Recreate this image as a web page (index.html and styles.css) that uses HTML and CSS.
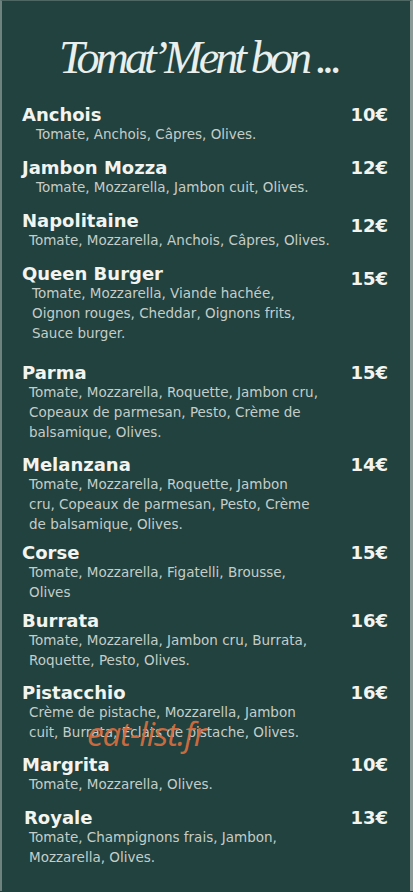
FILE: index.html
```html
<!DOCTYPE html>
<html lang="fr">
  <head>
    <meta charset="UTF-8" />
    <title>Tomat'Ment bon</title>
    <link rel="stylesheet" href="styles.css">
  </head>
  <body>
    <!-- carte des pizzas -->
    <div class="menu">
      <h1 class="title">Tomat’Ment bon ...</h1>

      <ul class="list">
        <li class="item item--wide">
          <div class="head"><span class="name">Anchois</span><span class="price">10€</span></div>
          <p class="desc desc--far">Tomate, Anchois, Câpres, Olives.</p>
        </li>
        <li class="item item--wide">
          <div class="head"><span class="name">Jambon Mozza</span><span class="price">12€</span></div>
          <p class="desc desc--far">Tomate, Mozzarella, Jambon cuit, Olives.</p>
        </li>
        <li class="item item--wide">
          <div class="head"><span class="name">Napolitaine</span><span class="price price--low">12€</span></div>
          <p class="desc">Tomate, Mozzarella, Anchois, Câpres, Olives.</p>
        </li>
        <li class="item item--loose">
          <div class="head"><span class="name">Queen Burger</span><span class="price price--low">15€</span></div>
          <p class="desc desc--mid">Tomate, Mozzarella, Viande hachée,<br>Oignon rouges, Cheddar, Oignons frits,<br>Sauce burger.</p>
        </li>
        <li class="item">
          <div class="head"><span class="name">Parma</span><span class="price">15€</span></div>
          <p class="desc">Tomate, Mozzarella, Roquette, Jambon cru,<br>Copeaux de parmesan, Pesto, Crème de<br>balsamique, Olives.</p>
        </li>
        <li class="item item--tight">
          <div class="head"><span class="name">Melanzana</span><span class="price">14€</span></div>
          <p class="desc">Tomate, Mozzarella, Roquette, Jambon<br>cru, Copeaux de parmesan, Pesto, Crème<br>de balsamique, Olives.</p>
        </li>
        <li class="item item--tight">
          <div class="head"><span class="name">Corse</span><span class="price">15€</span></div>
          <p class="desc">Tomate, Mozzarella, Figatelli, Brousse,<br>Olives</p>
        </li>
        <li class="item">
          <div class="head"><span class="name">Burrata</span><span class="price">16€</span></div>
          <p class="desc">Tomate, Mozzarella, Jambon cru, Burrata,<br>Roquette, Pesto, Olives.</p>
        </li>
        <li class="item">
          <div class="head"><span class="name">Pistacchio</span><span class="price">16€</span></div>
          <p class="desc">Crème de pistache, Mozzarella, Jambon<br>cuit, Burrata, Eclats de pistache, Olives.</p>
        </li>
        <li class="item item--wide">
          <div class="head"><span class="name">Margrita</span><span class="price">10€</span></div>
          <p class="desc">Tomate, Mozzarella, Olives.</p>
        </li>
        <li class="item">
          <div class="head"><span class="name name--in">Royale</span><span class="price">13€</span></div>
          <p class="desc">Tomate, Champignons frais, Jambon,<br>Mozzarella, Olives.</p>
        </li>
      </ul>

      <!-- filigrane du site -->
      <span class="watermark">eat-list.fr</span>
    </div>
  </body>
</html>
```

FILE: styles.css
```css
/* fond vert sapin plein écran */
body {
  margin: 0;
  padding: 0;
  background: #21423e;
  font-family: "DejaVu Sans", Verdana, sans-serif;
}

.menu {
  position: relative;
  height: 891px;
  overflow: hidden;
  padding: 34px 22px 0 20px;
  box-sizing: border-box;
  border-top: 1px solid #4f6763;
  border-left: 2px solid #6e827e;
  border-right: 3px solid #8c9b98;
  background: #21423e;
}

/* titre italique serré */
.title {
  margin: 0 0 24px;
  padding-left: 37px;
  font-family: "Liberation Serif", "Times New Roman", serif;
  font-style: italic;
  font-weight: normal;
  font-size: 46px;
  line-height: 46px;
  letter-spacing: -3.9px;
  word-spacing: 0;
  color: #e9efec;
}

.list {
  list-style: none;
  margin: 0;
  padding: 0;
}

.item {
  margin-bottom: 13px;
}
.item--wide {
  margin-bottom: 14px;
}
.item--loose {
  margin-bottom: 20px;
}
.item--tight {
  margin-bottom: 9px;
}

.head {
  display: flex;
  justify-content: space-between;
  align-items: flex-start;
  font-weight: bold;
  font-size: 18px;
  line-height: 19px;
  color: #f3f4f0;
}
.name--in {
  padding-left: 2px;
}
/* prix un peu plus bas sur la photo */
.price--low {
  margin-top: 5px;
  margin-bottom: -5px;
}

.desc {
  margin: 0;
  padding-left: 7px;
  font-size: 13.5px;
  line-height: 20px;
  color: #c6cdc9;
}
.desc--far {
  padding-left: 14px;
}
.desc--mid {
  padding-left: 10px;
}

/* filigrane orange par-dessus le texte */
.watermark {
  position: absolute;
  left: 85px;
  top: 710px;
  font-family: "Open Sans", sans-serif;
  font-style: italic;
  font-size: 33px;
  letter-spacing: -1px;
  color: #d86d3e;
  opacity: 0.92;
}
```
